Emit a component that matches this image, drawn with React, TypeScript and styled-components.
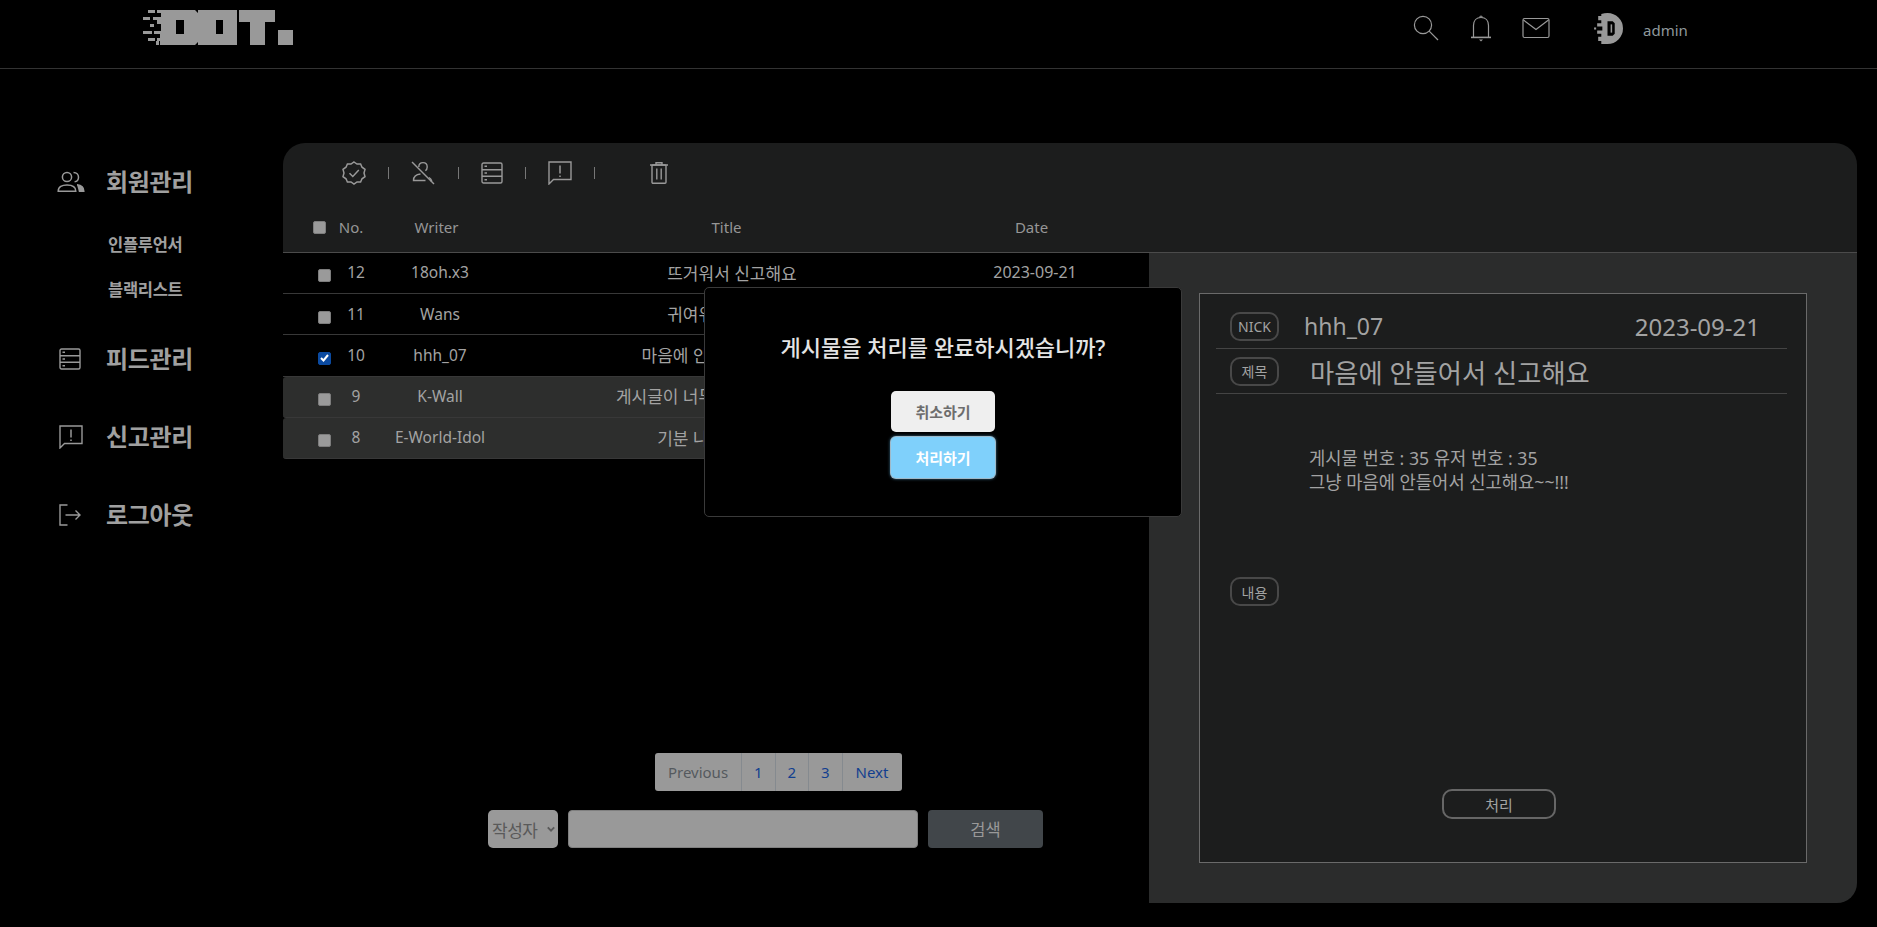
import React from 'react';
import styled, { createGlobalStyle } from 'styled-components';

interface Report {
  no: number;
  writer: string;
  title: string;
  date: string;
  checked?: boolean;
  handled?: boolean;
}

const reports: Array<Report> = [
  { no: 12, writer: '18oh.x3', title: '뜨거워서 신고해요', date: '2023-09-21' },
  { no: 11, writer: 'Wans', title: '귀여워서 신고해요', date: '2023-09-21' },
  { no: 10, writer: 'hhh_07', title: '마음에 안들어서 신고해요', date: '2023-09-21', checked: true },
  { no: 9, writer: 'K-Wall', title: '게시글이 너무 이상해서 신고해요', date: '2023-09-21', handled: true },
  { no: 8, writer: 'E-World-Idol', title: '기분 나빠서 신고해요', date: '2023-09-21', handled: true },
];

const Logo = (): JSX.Element => (
  <svg width="150" height="35" viewBox="0 0 150 35" fill="#999" aria-label="DOT logo">
    <rect x="5" y="0" width="7" height="3" />
    <rect x="0" y="7" width="7" height="3" />
    <rect x="7" y="14" width="4" height="3" />
    <rect x="0" y="21" width="9" height="3" />
    <rect x="5" y="28" width="7" height="3" />
    <rect x="13" y="31" width="3" height="4" />
    <path
      fillRule="evenodd"
      d="M14 0H52L55 3V32L52 35H17V31H14V28H17V24H11V21H18V14H14V10H10V7H18V3H14ZM33 10V24H41V10Z"
    />
    <path fillRule="evenodd" d="M55 0H94V35H55ZM73 10V24H80V10Z" />
    <path d="M96 0H132V12H122V35H107V12H96Z" />
    <rect x="135" y="20" width="15" height="15" />
  </svg>
);

const Avatar = (): JSX.Element => (
  <svg width="31" height="31" viewBox="0 0 30 30">
    <path fill="#999" d="M15 0A15 15 0 0 1 15 30H9V27H6V23H9V20H5V17H10V13H5V10H9V7H6V3H9V1Q12 0 15 0Z" />
    <path fill="#000" d="M15 8H20L22 10V20L20 22H15Z" />
    <path fill="#999" d="M18 11H19.5V19H18Z" />
    <rect x="2" y="14" width="2" height="2" fill="#999" />
  </svg>
);

const icon = { fill: 'none', stroke: '#999', strokeWidth: 1.2 };

const SearchIcon = () => (
  <svg width="26" height="26" viewBox="0 0 26 26" {...icon}>
    <circle cx="10" cy="10" r="8.6" />
    <path d="M16.2 16.2L25 25" />
  </svg>
);

const BellIcon = () => (
  <svg width="22" height="28" viewBox="0 0 22 28" {...icon}>
    <path d="M3.5 23V11.5C3.5 6.5 6.5 3.5 11 3.5S18.5 6.5 18.5 11.5V23" />
    <path d="M1 23.4H21" strokeWidth="1.6" />
    <path d="M9.5 3.6Q11 .4 12.5 3.6" />
    <path d="M9 25.5H13L11 27.5Z" fill="#999" stroke="none" />
  </svg>
);

const MailIcon = () => (
  <svg width="28" height="22" viewBox="0 0 28 22" {...icon}>
    <rect x="1" y="1.5" width="26" height="19" rx="1.5" />
    <path d="M1.5 3L14 12.5L26.5 3" />
  </svg>
);

const PeopleIcon = () => (
  <svg width="28" height="22" viewBox="0 0 28 22" {...icon} strokeWidth="1.5">
    <circle cx="10" cy="6" r="4.6" />
    <path d="M1.2 20.3C1.2 15.8 5 14 10 14S18.8 15.8 18.8 20.3Z" />
    <path d="M16.5 1.6C20 1.6 21.5 4 21.5 6.2S20 10.5 17.6 10.8" />
    <path d="M20 13.8C24 14.2 26.8 16.2 26.8 20.3H21.8" fill="#999" />
  </svg>
);

const ServerIcon = ({ size = 22 }: { size?: number }) => (
  <svg width={size} height={size} viewBox="0 0 22 22" {...icon} strokeWidth="1.4">
    <rect x="1" y="1" width="20" height="20" rx="1.5" />
    <path d="M1 7.7H21M1 14.3H21" />
    <path d="M3.5 4.3H6M3.5 11H6M3.5 17.7H6" strokeWidth="1.6" />
  </svg>
);

const ReportIcon = ({ size = 24 }: { size?: number }) => (
  <svg width={size} height={size} viewBox="0 0 24 24" {...icon} strokeWidth="1.4">
    <path d="M1 1H23V18.5H5.5L1 23Z" />
    <path d="M12 4.5V12.5M12 14.5V16" strokeWidth="1.5" />
  </svg>
);

const LogoutIcon = () => (
  <svg width="22" height="22" viewBox="0 0 22 22" {...icon} strokeWidth="1.4">
    <path d="M8.5 1H1V21H8.5" />
    <path d="M6.5 11H21M16.5 6.5L21 11L16.5 15.5" />
  </svg>
);

const BadgeIcon = () => (
  <svg width="24" height="24" viewBox="0 0 24 24" {...icon} strokeWidth="1.5">
    <path d="M12 1L15 3H18.6L20 6.2L23 8.4L22 12L23 15.6L20 17.8L18.6 21H15L12 23L9 21H5.4L4 17.8L1 15.6L2 12L1 8.4L4 6.2L5.4 3H9Z" />
    <path d="M7.5 12.2L10.8 15.5L16.8 9" />
  </svg>
);

const PersonOffIcon = () => (
  <svg width="24" height="24" viewBox="0 0 24 24" {...icon} strokeWidth="1.4">
    <path d="M1 1L23 23" />
    <path d="M7.8 6C7.8 3.4 9.6 1.6 12 1.6S16.2 3.4 16.2 6C16.2 7.6 15.5 9 14.4 9.8" />
    <path d="M9.5 13C5 13.4 2.5 15.5 2.5 19.5H14.5" />
    <path d="M18 16.5Q20 17.8 20.5 19.5H19" />
  </svg>
);

const TrashIcon = () => (
  <svg width="18" height="22" viewBox="0 0 18 22" {...icon} strokeWidth="1.4">
    <path d="M0 3H18M6 3V.8H12V3" />
    <rect x="2" y="3" width="14" height="18.2" rx="1" />
    <path d="M6.8 6.5V17.5M11.2 6.5V17.5" strokeWidth="1.4" />
  </svg>
);

const CheckMark = () => (
  <svg width="9" height="8" viewBox="0 0 9 8" fill="none" stroke="#fff" strokeWidth="2">
    <path d="M1 4L3.5 6.5L8 1" />
  </svg>
);

interface CheckProps {
  checked?: boolean;
}

const RowCheck = ({ checked }: CheckProps): JSX.Element => (
  <CheckBox $checked={checked}>{checked && <CheckMark />}</CheckBox>
);

const DetailPanel = (): JSX.Element => (
  <Detail>
    <DetailBox>
      <DetailRow>
        <Tag>NICK</Tag>
        <Nick>hhh_07</Nick>
        <DetailDate>2023-09-21</DetailDate>
      </DetailRow>
      <DetailRow>
        <Tag>제목</Tag>
        <DetailTitle>마음에 안들어서 신고해요</DetailTitle>
      </DetailRow>
      <Body>
        <p>게시물 번호 : 35 유저 번호 : 35</p>
        <p>그냥 마음에 안들어서 신고해요~~!!!</p>
      </Body>
      <Tag $content>내용</Tag>
      <HandleButton>처리</HandleButton>
    </DetailBox>
  </Detail>
);

const ConfirmModal = (): JSX.Element => (
  <Modal>
    <ModalTitle>게시물을 처리를 완료하시겠습니까?</ModalTitle>
    <ModalButton>취소하기</ModalButton>
    <ModalButton $primary>처리하기</ModalButton>
  </Modal>
);

function App(): JSX.Element {
  return (
    <>
      <GlobalStyle />
      <Header>
        <LogoWrap>
          <Logo />
        </LogoWrap>
        <HeaderIcons>
          <SearchIcon />
          <BellIcon />
          <MailIcon />
        </HeaderIcons>
        <Profile>
          <Avatar />
          <span>admin</span>
        </Profile>
      </Header>
      <Page>
        <Sidebar>
          <NavItem>
            <NavIcon><PeopleIcon /></NavIcon>
            회원관리
          </NavItem>
          <SubNav>
            <span>인플루언서</span>
            <span>블랙리스트</span>
          </SubNav>
          <NavItem $gap={44}>
            <NavIcon $inset={2}><ServerIcon /></NavIcon>
            피드관리
          </NavItem>
          <NavItem $gap={48}>
            <NavIcon $inset={2}><ReportIcon /></NavIcon>
            신고관리
          </NavItem>
          <NavItem $gap={48}>
            <NavIcon $inset={2}><LogoutIcon /></NavIcon>
            로그아웃
          </NavItem>
        </Sidebar>
        <Board>
          <BoardTop>
            <Toolbar>
              <BadgeIcon />
              <Divider />
              <PersonOffIcon />
              <Divider />
              <ServerIcon />
              <Divider />
              <ReportIcon />
              <Divider />
              <TrashSlot><TrashIcon /></TrashSlot>
            </Toolbar>
            <HeadRow>
              <RowCheck />
              <span>No.</span>
              <span>Writer</span>
              <span>Title</span>
              <span>Date</span>
            </HeadRow>
          </BoardTop>
          <BoardBottom>
            <ListColumn>
              {reports.map((report) => (
                <ReportRow key={report.no} $handled={report.handled}>
                  <RowCheck checked={report.checked} />
                  <span>{report.no}</span>
                  <span>{report.writer}</span>
                  <RowTitle>{report.title}</RowTitle>
                  <RowDate>{report.date}</RowDate>
                </ReportRow>
              ))}
              <Pagination>
                <PageLink $muted $width={87}>Previous</PageLink>
                <PageLink $width={33.5}>1</PageLink>
                <PageLink $width={33.5}>2</PageLink>
                <PageLink $width={33.5}>3</PageLink>
                <PageLink $width={59}>Next</PageLink>
              </Pagination>
              <SearchBar>
                <SearchSelect>
                  작성자
                  <svg width="8" height="6" viewBox="0 0 10 7" fill="none" stroke="#5a5a5a" strokeWidth="2.4">
                    <path d="M1 1.5L5 5.5L9 1.5" />
                  </svg>
                </SearchSelect>
                <SearchInput />
                <SearchButton>검색</SearchButton>
              </SearchBar>
            </ListColumn>
            <DetailPanel />
          </BoardBottom>
          <ConfirmModal />
        </Board>
      </Page>
    </>
  );
}

export default App;

const GlobalStyle = createGlobalStyle`
  html, body {
    margin: 0;
    height: 100%;
    background: #000;
    overflow: hidden;
  }

  * {
    box-sizing: border-box;
  }

  body {
    font-family: "Noto Sans", "Noto Sans CJK KR", sans-serif;
    color: #a3a3a3;
  }
`;

const Header = styled.header`
  display: flex;
  align-items: flex-start;
  height: 69px;
  border-bottom: 1px solid #333;
`;

const LogoWrap = styled.div`
  margin: 10px 0 0 143px;
  height: 35px;
  line-height: 0;
`;

const HeaderIcons = styled.div`
  display: flex;
  align-items: center;
  gap: 30.5px;
  margin: 14px 0 0 1120px;
`;

const Profile = styled.div`
  display: flex;
  align-items: center;
  gap: 20px;
  margin: 13px 0 0 42px;
  font-size: 15px;
  color: #8f989c;

  span {
    padding-top: 2px;
  }
`;

const Page = styled.main`
  display: flex;
  padding: 74px 20px 0 0;
`;

const Sidebar = styled.nav`
  width: 283px;
  flex: none;
  padding: 24px 0 0 57px;
`;

const NavItem = styled.div<{ $gap?: number }>`
  display: flex;
  align-items: center;
  height: 30px;
  margin-top: ${({ $gap }) => $gap || 0}px;
  font-size: 24px;
  font-weight: 700;
  line-height: 30px;
  letter-spacing: -0.3px;
  color: #a0a0a0;
`;

const NavIcon = styled.span<{ $inset?: number }>`
  display: flex;
  width: 49px;
  flex: none;
  padding-left: ${({ $inset }) => $inset || 0}px;
`;

const SubNav = styled.div`
  display: flex;
  flex-direction: column;
  gap: 25px;
  padding: 38px 0 0 51px;
  font-size: 16.5px;
  line-height: 20px;
  font-weight: 700;
  letter-spacing: -0.3px;
  color: #a0a0a0;
`;

const Board = styled.section`
  position: relative;
  flex: 1;
  height: 760px;
`;

const BoardTop = styled.div`
  height: 110px;
  background: #1c1d1d;
  border-radius: 22px 22px 0 0;
  border-bottom: 1px solid #4b4b4b;
`;

const Toolbar = styled.div`
  display: flex;
  align-items: center;
  gap: 22.2px;
  height: 60px;
  padding: 0 0 0 59px;
`;

const Divider = styled.i`
  display: block;
  width: 1px;
  height: 12px;
  background: #777;
`;

const TrashSlot = styled.span`
  display: flex;
  margin-left: 32px;
`;

const HeadRow = styled.div`
  display: grid;
  grid-template-columns: 22px 32px 139px 441px 169px;
  align-items: center;
  height: 48px;
  padding-left: 30px;
  font-size: 15px;
  color: #969696;

  span {
    text-align: center;
  }
`;

const BoardBottom = styled.div`
  display: flex;
  height: 650px;
`;

const ListColumn = styled.div`
  display: flex;
  flex-direction: column;
  width: 866px;
  flex: none;
`;

const ReportRow = styled.div<{ $handled?: boolean }>`
  display: grid;
  grid-template-columns: 22px 32px 136px 448px 158px;
  align-items: center;
  height: 41.2px;
  padding: 0 0 1.5px 35px;
  font-size: 15.5px;
  color: #a3a3a3;
  background: ${({ $handled }) => ($handled ? '#2d2e2d' : 'transparent')};
  border-bottom: 1px solid #383838;
  border-radius: ${({ $handled }) => ($handled ? '3px' : '0')};

  span {
    text-align: center;
  }

  & > span:first-child {
    margin-top: 7px;
  }
`;

const RowTitle = styled.span`
  font-size: 17px;
  white-space: nowrap;
`;

const RowDate = styled.span`
  font-size: 16px;
`;

const CheckBox = styled.span<{ $checked?: boolean }>`
  display: flex;
  align-items: center;
  justify-content: center;
  width: 13px;
  height: 13px;
  border-radius: 2px;
  background: ${({ $checked }) => ($checked ? '#0b4aa0' : '#9a9a9a')};
  border: 1px solid ${({ $checked }) => ($checked ? '#0b4aa0' : '#7d7d7d')};
`;

const Pagination = styled.div`
  display: flex;
  align-self: flex-start;
  height: 38px;
  margin: auto 0 0 372px;
  background: #999;
  border-radius: 3px;
  font-size: 15px;
`;

const PageLink = styled.span<{ $muted?: boolean; $width: number }>`
  display: flex;
  align-items: center;
  justify-content: center;
  width: ${({ $width }) => $width}px;
  color: ${({ $muted }) => ($muted ? '#55595e' : '#123f8f')};
  border-right: 1px solid #858a8f;

  &:last-child {
    border-right: 0;
  }
`;

const SearchBar = styled.div`
  display: flex;
  gap: 10px;
  margin: 19px 0 55px 205px;
  height: 38px;
`;

const SearchSelect = styled.div`
  display: flex;
  align-items: center;
  justify-content: space-between;
  width: 70px;
  padding: 0 3px 0 4px;
  background: #999;
  border-radius: 5px;
  font-size: 17px;
  letter-spacing: -0.5px;
  color: #5a5a5a;
`;

const SearchInput = styled.div`
  width: 350px;
  background: #999;
  border: 1px solid #7f7f7f;
  border-radius: 4px;
`;

const SearchButton = styled.div`
  display: flex;
  align-items: center;
  justify-content: center;
  width: 115px;
  background: #41464a;
  border-radius: 4px;
  font-size: 16.5px;
  color: #999;
`;

const Detail = styled.aside`
  flex: 1;
  padding: 40px 50px 40px 50px;
  background: #2b2c2c;
  border-radius: 0 0 20px 0;
`;

const DetailBox = styled.div`
  position: relative;
  display: flex;
  flex-direction: column;
  height: 100%;
  padding: 10px 19px 0 16px;
  background: #1c1d1d;
  border: 1px solid #6a6a6a;
`;

const DetailRow = styled.div`
  display: flex;
  align-items: center;
  height: 45px;
  padding-left: 14px;
  border-bottom: 1px solid #444;
`;

const Tag = styled.span<{ $content?: boolean }>`
  display: flex;
  align-items: center;
  justify-content: center;
  width: 49px;
  height: 29px;
  flex: none;
  margin-left: ${({ $content }) => ($content ? '14px' : '0')};
  margin-top: ${({ $content }) => ($content ? '83px' : '0')};
  border: 2px solid #484848;
  border-radius: 10px;
  font-size: 14px;
  color: #a3a3a3;
`;

const Nick = styled.span`
  margin-left: 25px;
  font-size: 23px;
  color: #a3a3a3;
`;

const DetailDate = styled.span`
  margin-left: auto;
  padding-right: 27px;
  font-size: 24px;
  color: #a3a3a3;
`;

const DetailTitle = styled.span`
  margin-left: 31px;
  font-size: 26.3px;
  color: #a3a3a3;
`;

const Body = styled.div`
  padding: 52px 0 0 93px;
  font-size: 17.7px;
  line-height: 24px;
  color: #a3a3a3;

  p {
    margin: 0;
  }
`;

const HandleButton = styled.div`
  display: flex;
  align-items: center;
  justify-content: center;
  align-self: center;
  width: 114px;
  height: 30px;
  margin: 183px 5px 0 0;
  border: 2px solid #666;
  border-radius: 10px;
  font-size: 15px;
  color: #a3a3a3;
`;

const Modal = styled.div`
  position: absolute;
  left: 421px;
  top: 144px;
  display: flex;
  flex-direction: column;
  align-items: center;
  width: 478px;
  height: 230px;
  padding-top: 44px;
  background: #000;
  border: 1px solid #3a3a3a;
  border-radius: 5px;
`;

const ModalTitle = styled.div`
  margin-bottom: 29px;
  font-size: 22px;
  font-weight: 500;
  line-height: 30px;
  color: #e4e4e4;
`;

const ModalButton = styled.div<{ $primary?: boolean }>`
  display: flex;
  align-items: center;
  justify-content: center;
  width: 104px;
  height: 41px;
  margin-bottom: 5px;
  border-radius: 5px;
  font-size: 15px;
  font-weight: 700;
  color: ${({ $primary }) => ($primary ? '#fff' : '#6d6d6d')};
  background: ${({ $primary }) => ($primary ? '#7fd0fb' : '#efefef')};
  box-shadow: ${({ $primary }) => ($primary ? '0 0 0 1px #9fb9c8, 0 0 3px 1px #3a6f8c' : 'none')};
`;
